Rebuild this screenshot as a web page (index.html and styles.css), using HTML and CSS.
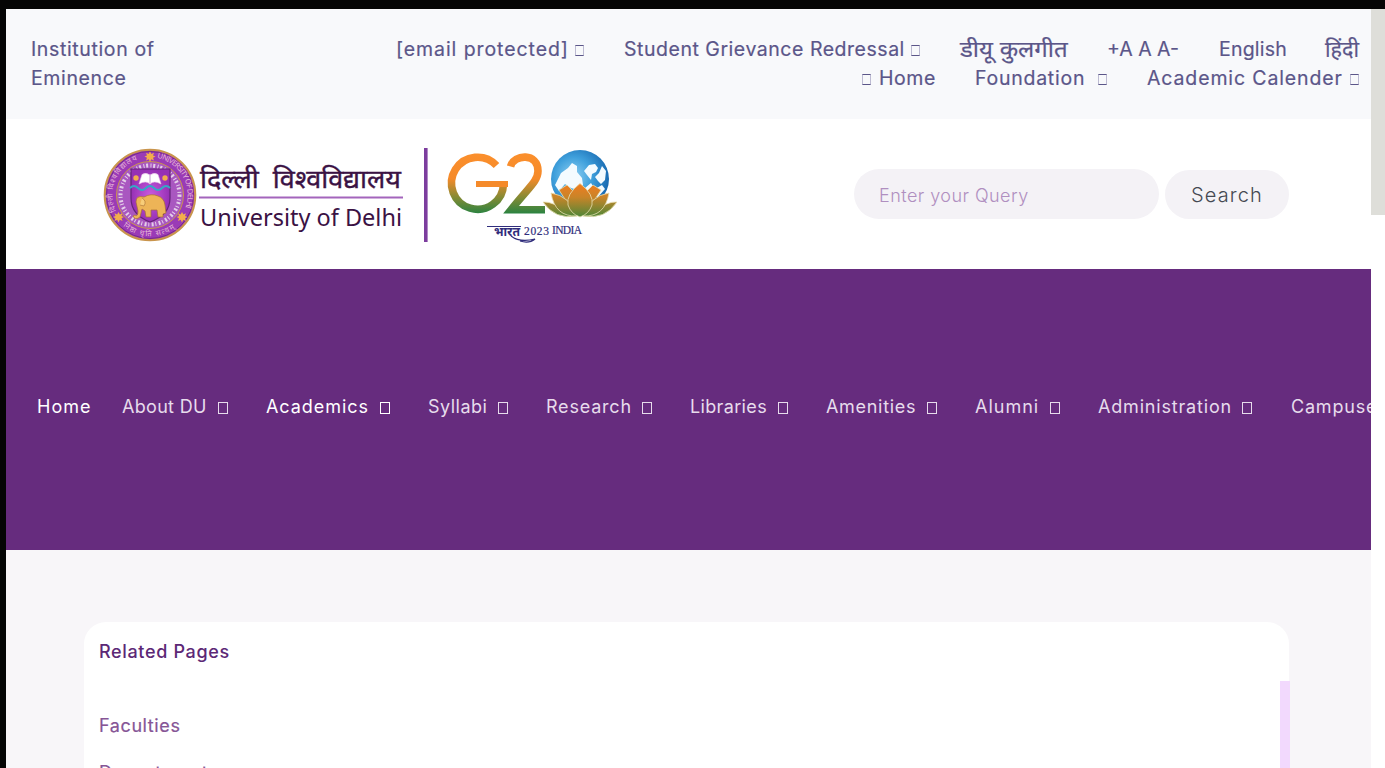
FILE: index.html
```html
<!DOCTYPE html>
<html lang="en">
<head>
<meta charset="utf-8">
<title>University of Delhi</title>
<link rel="stylesheet" href="styles.css">
</head>
<body>
<div class="window">
<div class="page">
  <header class="topbar">
    <div class="eminence">Institution of<br>Eminence</div>
    <div class="top-links">
      <div class="top-row">
        <a class="w-email"><span>[email protected]</span><i class="box"></i></a>
        <a class="w-grievance"><span>Student Grievance Redressal</span><i class="box"></i></a>
        <a class="w-kulgeet"><span>डीयू कुलगीत</span></a>
        <a class="w-size">+A A A-</a>
        <a class="w-english">English</a>
        <a class="w-hindi">हिंदी</a>
      </div>
      <div class="top-row">
        <a class="w-home"><i class="box"></i><span>Home</span></a>
        <a class="w-foundation"><span>Foundation</span><i class="box"></i></a>
        <a class="w-calender"><span>Academic Calender</span><i class="box"></i></a>
      </div>
    </div>
  </header>

  <section class="brand">
    <svg class="logo" viewBox="100 140 530 110" width="530" height="110">
      <defs>
        <linearGradient id="tri" gradientUnits="userSpaceOnUse" x1="0" y1="153" x2="0" y2="214">
          <stop offset="0" stop-color="#fb8f2c"/><stop offset=".42" stop-color="#f58a2a"/><stop offset=".75" stop-color="#7c8a35"/><stop offset="1" stop-color="#288342"/>
        </linearGradient>
        <linearGradient id="petal" gradientUnits="userSpaceOnUse" x1="0" y1="184" x2="0" y2="217">
          <stop offset="0" stop-color="#f07c20"/><stop offset=".4" stop-color="#c98428"/><stop offset="1" stop-color="#4d8738"/>
        </linearGradient>
        <radialGradient id="globe" cx=".38" cy=".45" r=".65">
          <stop offset="0" stop-color="#8fd0f2"/><stop offset=".5" stop-color="#3fa0dc"/><stop offset="1" stop-color="#1565ad"/>
        </radialGradient>
        <radialGradient id="violet">
          <stop offset="0" stop-color="#c85ade"/><stop offset="1" stop-color="#9630b4"/>
        </radialGradient>
        <path id="ringL" d="M116 211A37.500 37.500 0 0 1 145 158"/>
        <path id="ringR" d="M157 158A37.500 37.500 0 0 1 183 213"/>
        <path id="ringB" d="M123 226A42 42 0 0 0 180 224"/>
        <path id="star" d="M0-5 1.4-2.5 4-3.8 3-1 5.5 0 3 1.2 4 4 1.3 2.8 0 5.5-1.3 2.8-4 4-3 1.2-5.5 0-3-1-4-3.8-1.4-2.5Z"/>
      </defs>
      <circle cx="150" cy="195" r="45.300" fill="#9a3bb6" stroke="#c9954d" stroke-width="2"/>
      <circle cx="150" cy="195" r="43.500" fill="none" stroke="#6b2483" stroke-width=".8"/>
      <circle cx="150" cy="195" r="33.500" fill="#a957c0" stroke="#c9954d"/>
      <circle cx="150" cy="195" r="29.500" fill="none" stroke="#e4cfe9" stroke-width="4" stroke-dasharray="2 2.4 1 1.7"/>
      <g class="seal-text">
        <text><textPath href="#ringL" textLength="62">दिल्ली विश्वविद्यालय</textPath></text>
        <text><textPath href="#ringR" textLength="65">UNIVERSITY OF DELHI</textPath></text>
        <text><textPath href="#ringB" textLength="56">निष्ठा धृति सत्यम्</textPath></text>
      </g>
      <g fill="#f3ae4b"><use href="#star" x="150" y="156.500"/><use href="#star" x="118.500" y="217"/><use href="#star" x="182" y="217"/></g>
      <path d="M131 169H170V198Q170 215 150 222 131 215 131 198Z" fill="url(#violet)" stroke="#652379" stroke-width="1.200"/>
      <path d="M130 188Q134 184 138 188T146 188T154 188T162 188T170 188" fill="none" stroke="#34a9c7" stroke-width="1.800"/>
      <path d="M142 174.500Q146 172 150 175 154 172 158 174.500L161 184Q154 180 150 184 146 180 139 184Z" fill="#fff" stroke="#e8c3e8" stroke-width=".6"/>
      <path d="M150 175V183" stroke="#b77cc8" stroke-width=".8"/>
      <g fill="#f3ae4b"><circle cx="136" cy="178" r="2.700"/><circle cx="165" cy="178" r="2.700"/></g>
      <path d="M136 202Q136 195 144 197 151 193 158 196 164 198 165 205L166 213 163 214V217H158L157 210H151V217H146L145 211 142 209 140 217Q135 221 133 216L135 215Q138 217 138 211Z" fill="#edb457" stroke="#a86e34" stroke-width=".7"/>
      <path d="M142 198Q147 201 144 206L140 205" fill="#f7cd79" stroke="#a86e34" stroke-width=".6"/>

      <text class="name-hi" x="200" y="188" textLength="201" lengthAdjust="spacingAndGlyphs">दिल्ली&#160; विश्वविद्यालय</text>
      <path d="M199 197.500H403" stroke="#a365bc" stroke-width="2"/>
      <text class="name-en" x="200" y="226" textLength="202" lengthAdjust="spacingAndGlyphs">University of Delhi</text>
      <path d="M425.800 148V242" stroke="#7c3d9e" stroke-width="3.600"/>

      <path d="M496.500 165.500A26 26 0 1 0 503.500 183.800" fill="none" stroke="url(#tri)" stroke-width="7.600"/>
      <path d="M476 181H508V187H476Z" fill="#f58a2a"/>
      <path d="M510.500 166.500C514 154 538 152.500 538 171 538 181 529 187 511 209.800H545" fill="none" stroke="url(#tri)" stroke-width="7.600"/>
      <circle cx="580" cy="179" r="29" fill="url(#globe)"/>
      <path d="M558 179 561 173 568 168 572 163 577 166 577 172 582 178 583 185 578 190 571 188 565 184 559 191 555 185Z M584 171 589 165 595 164 598 168 596 172 592 174 591 180 587 175Z M595 177 599 173 602 166 606 171 605 180 601 184 598 181Z M585 188 591 183 595 189 602 185 605 189 598 197 588 196Z" fill="#f4fbff"/>
      <g fill="url(#petal)" stroke="#e8e0b2" stroke-width=".8">
        <path d="M559 190 567 185 574 192 570 207Z M601 190 593 185 586 192 590 207Z"/>
        <path d="M543 202Q553 201 568 213L577 216Q555 220 543 202Z M617 202Q607 201 592 213L583 216Q605 220 617 202Z"/>
        <path d="M551 193Q570 196 577 216 555 217 551 193Z M609 193Q590 196 583 216 605 217 609 193Z"/>
        <path d="M580 183.500Q566 194 568 205 571 214 580 217 589 214 592 205 594 194 580 183.500Z"/>
      </g>
      <text class="bharat" x="494" y="236" textLength="26" lengthAdjust="spacingAndGlyphs">भारत</text>
      <path d="M487 226.500H521M511 236Q520 243 535 239 529 244 520 241" fill="none" stroke="#302d7c" stroke-width="1.200"/>
      <text class="india" x="524" y="235" textLength="25">2023</text>
      <text class="india" x="552" y="234" textLength="30">INDIA</text>
    </svg>
    <form class="search">
      <input type="text" placeholder="Enter your Query">
      <button type="button">Search</button>
    </form>
  </section>

  <nav class="menu">
    <a class="n-home on">Home</a>
    <a class="n-about"><span>About DU</span><i class="box"></i></a>
    <a class="n-academics on"><span>Academics</span><i class="box"></i></a>
    <a class="n-syllabi"><span>Syllabi</span><i class="box"></i></a>
    <a class="n-research"><span>Research</span><i class="box"></i></a>
    <a class="n-libraries"><span>Libraries</span><i class="box"></i></a>
    <a class="n-amenities"><span>Amenities</span><i class="box"></i></a>
    <a class="n-alumni"><span>Alumni</span><i class="box"></i></a>
    <a class="n-admin"><span>Administration</span><i class="box"></i></a>
    <a class="n-campuses">Campuses</a>
  </nav>

  <main class="content">
    <div class="card">
      <h2>Related Pages</h2>
      <div class="list">
        <ul><li class="faculties">Faculties</li><li class="departments">Departments</li></ul>
        <div class="list-scroll"></div>
      </div>
    </div>
  </main>
</div>
<div class="scroll"><div class="thumb"></div></div>
</div>
</body>
</html>
```
FILE: styles.css
```css
* { box-sizing: border-box; }
body { margin: 0; font-family: Inter, "Noto Sans", sans-serif; overflow: hidden; }
.window { display: flex; width: 1385px; height: 768px; border-top: 9px solid #050505; border-left: 6px solid #050505; background: #fff; overflow: hidden; }
.page { width: 1365px; flex: none; overflow: hidden; }
.scroll { width: 14px; flex: none; background: #fff; }
.thumb { height: 206px; background: #deded9; }
.box { display: block; flex: none; width: 9px; height: 11px; border: 1px solid currentColor; }

.topbar { display: flex; justify-content: space-between; height: 110px; padding: 26px 11px 0 25px; background: #f8f9fb; color: #5b5689; font-size: 19.5px; line-height: 29px; -webkit-text-stroke: .2px; white-space: nowrap; }
.eminence { letter-spacing: .63px; }
.top-row { display: flex; justify-content: flex-end; gap: 39px; height: 29px; }
.top-row a { display: flex; justify-content: space-between; align-items: center; flex: none; }
.top-row .box { border-left-color: #bdbbd2; border-right-color: #bdbbd2; margin: 2px 1px 0 0; }
.w-email { width: 189px; letter-spacing: .92px; }
.w-grievance { width: 297px; letter-spacing: .53px; }
.w-kulgeet { width: 108px; font-size: 22px; }
.w-kulgeet span { transform: scaleX(1.09); transform-origin: 0 50%; }
.w-size { width: 73px; }
.w-english { width: 67px; letter-spacing: .2px; }
.w-hindi { width: 35px; font-size: 21.5px; }
.w-home { width: 74px; letter-spacing: .6px; }
.w-foundation { width: 133px; letter-spacing: .75px; }
.w-calender { width: 213px; letter-spacing: .87px; }

.brand { display: flex; justify-content: space-between; height: 150px; padding: 21px 82px 0 94px; background: #fff; }
.logo { display: block; flex: none; }
.seal-text { font-family: "Noto Sans", sans-serif; font-size: 7.5px; fill: #e7b9d8; }
.name-hi { font-family: "Noto Sans", sans-serif; font-size: 25px; fill: #3b1244; stroke: #3b1244; stroke-width: .4px; }
.name-en { font-family: "Noto Sans", sans-serif; font-size: 23.5px; fill: #3b1244; }
.bharat { font-family: "Noto Sans", sans-serif; font-size: 13px; font-weight: 700; fill: #302d7c; }
.india { font-family: "Liberation Serif", serif; font-size: 11.5px; fill: #302d7c; stroke: #302d7c; stroke-width: .2px; }
.search { display: flex; align-items: flex-start; gap: 6px; padding-top: 29px; }
.search input { width: 305px; height: 50px; border: 0; border-radius: 25px; padding: 3px 25px 0; background: #f4f2f6; font: 300 18px Inter, sans-serif; letter-spacing: .45px; }
.search input::placeholder { color: #b08fc0; opacity: 1; }
.search button { width: 124px; height: 49px; margin-top: 1px; border: 0; border-radius: 25px; padding: 0; background: #f4f2f6; color: #454952; font: 350 20px Inter, sans-serif; letter-spacing: 1.1px; }

.menu { display: flex; align-items: center; gap: 37px; height: 281px; padding: 0 0 5px 31px; background: #662c7e; color: #e7dcec; font-size: 18px; line-height: 26px; white-space: nowrap; }
.menu a { display: flex; align-items: center; justify-content: space-between; flex: none; }
.menu .box { width: 10px; height: 12px; margin: 1px 1px 0 0; }
.menu .on { color: #fff; }
.n-home { width: 54px; margin-right: -6px; letter-spacing: 1px; }
.n-about { width: 107px; letter-spacing: .3px; }
.n-academics { width: 125px; letter-spacing: .95px; }
.n-syllabi { width: 81px; letter-spacing: .5px; }
.n-research { width: 107px; letter-spacing: .8px; }
.n-libraries { width: 99px; letter-spacing: .35px; }
.n-amenities { width: 112px; letter-spacing: .7px; }
.n-alumni { width: 86px; letter-spacing: 1px; }
.n-admin { width: 155px; letter-spacing: .82px; }
.n-campuses { margin-left: 1px; letter-spacing: .8px; }

.content { height: 230px; padding: 72px 81px 0 78px; background: #f8f6f9; }
.card { height: 300px; width: 1205px; border-radius: 22px; background: #fff; }
.card h2 { margin: 0; height: 59px; padding: 16px 15px 0; color: #5c2876; font-size: 18px; font-weight: 500; line-height: 28px; letter-spacing: .65px; }
.list { display: flex; justify-content: space-between; width: 1206px; height: 240px; }
.list ul { list-style: none; margin: 0; padding: 22px 15px; color: #865596; font-size: 18px; line-height: 47px; }
.list li { line-height: 47px; -webkit-text-stroke: .2px; letter-spacing: .6px; }
.list .faculties { line-height: 46px; }
.list .departments { letter-spacing: .9px; }
.list-scroll { width: 10px; background: #f2d9fd; }
```
